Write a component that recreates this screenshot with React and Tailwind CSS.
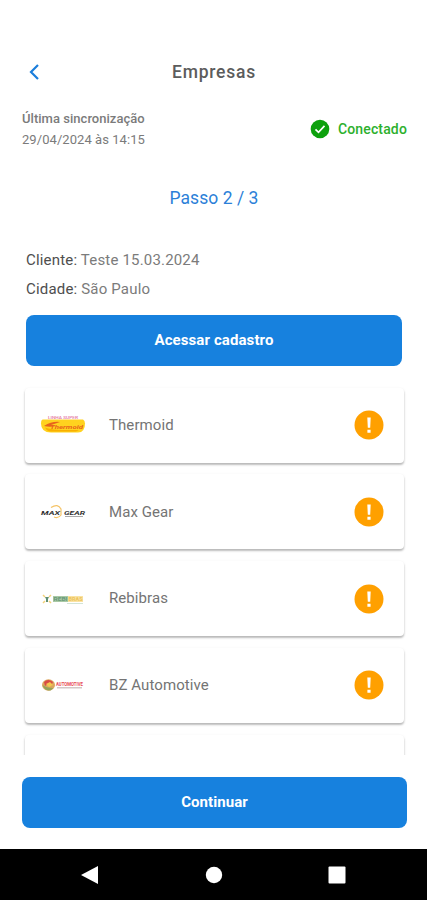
function ThermoidLogo() {
  return (
    <svg viewBox="0 0 46 26" className="h-[26px] w-[46px]">
      <text x="8" y="7" textLength="30" lengthAdjust="spacingAndGlyphs" fontSize="3.5" fontWeight="500" fill="#e477a2">LINHA SUPER</text>
      <path d="M3 7.500h40q2 1 2 4 0 9-7 9H11Q1 20.500 1 11.500q0-4 2-4z" fill="#ffd21f" />
      <path d="M5 15.500q6 3 34 2.500l-3 1.500H11q-4 0-6-4z" fill="#f9b000" />
      <path d="M4 14q8-5 16-4l-9 3 5 1q-6 1.500-12 0z" fill="#e8641c" />
      <text x="10" y="16.500" textLength="33" lengthAdjust="spacingAndGlyphs" fontSize="6" fontWeight="700" fontStyle="italic" fill="#e8641c">Thermoid</text>
    </svg>
  );
}

function MaxGearLogo() {
  return (
    <svg viewBox="0 0 46 26" className="h-[26px] w-[46px]">
      <path d="M11 8.500Q18 4 21 10v6q-3 4-7 2" fill="none" stroke="#f5c366" strokeWidth="1.200" />
      <text x="1" y="15.500" textLength="19" lengthAdjust="spacingAndGlyphs" fontSize="6" fontWeight="700" fontStyle="italic" fill="#333">MAX</text>
      <text x="24" y="15.500" textLength="21" lengthAdjust="spacingAndGlyphs" fontSize="6" fontWeight="700" fontStyle="italic" fill="#333">GEAR</text>
      <path d="M25 17.500h18" stroke="#aaa" strokeWidth="1" />
    </svg>
  );
}

function RebibrasLogo() {
  return (
    <svg viewBox="0 0 46 26" className="h-[26px] w-[46px]">
      <path d="M3 9l2 2M11 9l-2 2M3 17l2-2M11 17l-2-2" stroke="#f3d27c" strokeWidth="1.500" />
      <path d="M5 11h4l-1 2v3H6v-3z" fill="#5f8f72" />
      <rect x="13" y="10" width="15" height="6" fill="#a9c9a5" />
      <rect x="28" y="10" width="15" height="6" fill="#fae3a2" />
      <text x="13.500" y="15" textLength="14" lengthAdjust="spacingAndGlyphs" fontSize="5" fontWeight="700" fill="#6a9a7a">REBI</text>
      <text x="28.500" y="15" textLength="14" lengthAdjust="spacingAndGlyphs" fontSize="5" fontWeight="700" fill="#edc45c">BRAS</text>
      <path d="M27 17.500h16" stroke="#c7ddcd" strokeWidth=".8" />
    </svg>
  );
}

function BZLogo() {
  return (
    <svg viewBox="0 0 46 26" className="h-[26px] w-[46px]">
      <ellipse cx="8.500" cy="13" rx="6.500" ry="5.800" fill="#dca65e" />
      <path d="M2.500 13q2 6 8 5.500l3-2.500q-7 0-11-3z" fill="#95a45a" />
      <path d="M4 10q4-4 9 0l-2 4-3-2-3 2z" fill="#d94b45" />
      <path d="M6 12l4-2 3 3-4 2z" fill="#f1c94f" />
      <text x="16" y="14" textLength="27" lengthAdjust="spacingAndGlyphs" fontSize="5" fontWeight="700" fill="#e84a54">AUTOMOTIVE</text>
      <path d="M17 15.800h25" stroke="#c9b9b9" strokeWidth="1.200" />
    </svg>
  );
}

const companies = [
  { name: "Thermoid", Logo: ThermoidLogo },
  { name: "Max Gear", Logo: MaxGearLogo },
  { name: "Rebibras", Logo: RebibrasLogo },
  { name: "BZ Automotive", Logo: BZLogo },
];

const cardShadow = "rounded-[4px] bg-white shadow-[0_2px_2px_rgba(0,0,0,0.22),0_1px_3px_rgba(0,0,0,0.10)]";

function CompanyCard({ name, Logo }) {
  return (
    <div className={`flex h-[75px] shrink-0 items-center pr-5 pl-[15px] ${cardShadow}`}>
      <Logo />
      <span className="ml-[23px] flex-1 text-[15px] tracking-[0.08px] text-[#747474]">{name}</span>
      <svg viewBox="0 0 30 30" className="h-[30px] w-[30px]">
        <circle cx="15" cy="15" r="14.500" fill="#ffa000" />
        <path d="M13.300 7.500h3.400l-.5 10.300h-2.400zM13.400 19.700h3.200v3h-3.200z" fill="#fff" />
      </svg>
    </div>
  );
}

export default function App() {
  return (
    <div className="flex h-[900px] w-[427px] flex-col overflow-hidden bg-white font-['Roboto',sans-serif]">
      {/* Header */}
      <header className="mt-[52px] grid h-10 shrink-0 grid-cols-3 items-center px-[22px]">
        <svg viewBox="0 0 12 18" className="ml-[6px] h-[18px] w-3" fill="none">
          <path d="M10 2L3 9l7 7" stroke="#1b7edb" strokeWidth="2.200" />
        </svg>
        <h1 className="pl-px text-center text-[17.5px] font-medium tracking-[0.75px] text-[#5c5c5c]">Empresas</h1>
      </header>

      {/* Sync status */}
      <div className="mt-4 flex h-[42px] shrink-0 items-center justify-between pr-5 pl-[22px]">
        <div className="text-[13px] leading-[21px] text-[#7b7b7b]">
          <p className="font-medium tracking-[0.03px]">Última sincronização</p>
          <p className="tracking-[0.06px]">29/04/2024 às 14:15</p>
        </div>
        <div className="flex items-center gap-2 text-[14px] font-medium tracking-[0.15px] text-[#2db02d]">
          <svg viewBox="0 0 20 20" className="h-5 w-5">
            <circle cx="10" cy="10" r="9.300" fill="#0da10d" />
            <path d="M5.500 10.300l3 3 6-6.500" fill="none" stroke="#fff" strokeWidth="1.700" />
          </svg>
          Conectado
        </div>
      </div>

      <p className="mt-9 h-6 shrink-0 pl-px text-center text-[17.5px] leading-6 tracking-[0.05px] text-[#2c7fd8]">Passo 2 / 3</p>

      {/* Client */}
      <div className="mt-[36px] shrink-0 pl-[26px] text-[15px] leading-[29px] tracking-[0.18px] text-[#7b7b7b]">
        <p><span className="text-[#4e4e4e]">Cliente:</span> Teste 15.03.2024</p>
        <p><span className="text-[#4e4e4e]">Cidade:</span> São Paulo</p>
      </div>
      <button className="mr-[25px] ml-[26px] mt-[11px] h-[51px] shrink-0 rounded-[8px] bg-[#1781de] text-[15px] font-bold tracking-[0.1px] text-white">
        Acessar cadastro
      </button>

      {/* Company list */}
      <div className="mt-[19px] flex h-[370px] shrink-0 flex-col gap-[11.8px] overflow-hidden pt-[2.5px] pr-[23px] pl-[25px]">
        {companies.map(c => (
          <CompanyCard key={c.name} {...c} />
        ))}
        <div className={`h-[75px] shrink-0 ${cardShadow}`} />
      </div>

      <button className="mr-5 ml-[22px] mt-[22px] h-[51px] shrink-0 rounded-[8px] bg-[#1781de] text-[15px] font-bold tracking-[0.05px] text-white">
        Continuar
      </button>

      {/* Android navigation bar */}
      <nav className="mt-auto flex h-[51px] shrink-0 items-center justify-between bg-black pr-[81px] pl-[81px]">
        <svg viewBox="0 0 18 18" className="h-[18px] w-[18px]" fill="#fff"><path d="M0 9L17 0v18z" /></svg>
        <svg viewBox="0 0 18 18" className="h-[18px] w-[18px]" fill="#fff"><circle cx="9" cy="9" r="8.200" /></svg>
        <svg viewBox="0 0 18 18" className="h-[18px] w-[18px]" fill="#fff"><rect x="0.500" y="0.500" width="17" height="17" rx="1" /></svg>
      </nav>
    </div>
  );
}
